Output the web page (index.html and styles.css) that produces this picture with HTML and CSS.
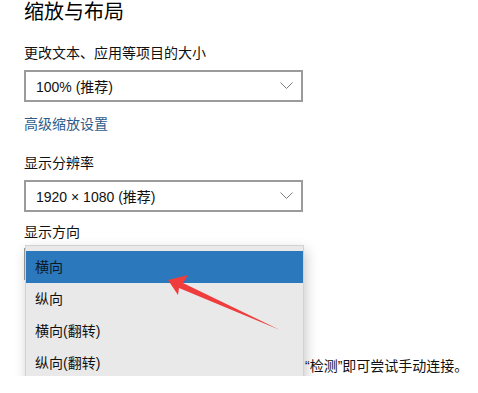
FILE: index.html
```html
<!DOCTYPE html>
<html>
<head>
    <meta charset="utf-8">
    <title>缩放与布局</title>
    <link rel="stylesheet" href="styles.css">
</head>
<body>
    <h1>缩放与布局</h1>

    <p class="label label-first">更改文本、应用等项目的大小</p>
    <div class="select">
        <span>100% (推荐)</span>
        <svg class="chevron" width="13" height="8" viewBox="0 0 13 8"><polyline points="0.5,0.5 6.5,6.5 12.5,0.5" fill="none" stroke="#7a7a7a" stroke-width="1"/></svg>
    </div>

    <a class="link" href="#">高级缩放设置</a>

    <p class="label label-res">显示分辨率</p>
    <div class="select">
        <span>1920 × 1080 (推荐)</span>
        <svg class="chevron" width="13" height="8" viewBox="0 0 13 8"><polyline points="0.5,0.5 6.5,6.5 12.5,0.5" fill="none" stroke="#7a7a7a" stroke-width="1"/></svg>
    </div>

    <div class="orient">
        <p class="label label-orient">显示方向</p>
        <div class="select select-hidden">
            <span>横向</span>
        </div>

        <!-- open dropdown popup -->
        <div class="menu">
            <div class="item active">横向</div>
            <div class="item">纵向</div>
            <div class="item">横向(翻转)</div>
            <div class="item">纵向(翻转)</div>
            <svg class="arrow" width="277" height="136" viewBox="0 0 277 136">
                <polygon points="142,34 162,29 157,37 254,84 153,42 152,49" fill="#ef3c3c"/>
            </svg>
        </div>
    </div>

    <p class="help">“检测”即可尝试手动连接。</p>
</body>
</html>
```

FILE: styles.css
```css
body {
    margin: 0;
    padding: 0 24px;
    font-family: "Liberation Sans", "Noto Sans CJK SC", sans-serif;
    color: #111;
    background-color: #ffffff;
}
h1 {
    margin: 0;
    padding-top: 1px;
    font-size: 20px;
    font-weight: normal;
    line-height: 23px;
    color: #000;
}
.label {
    margin: 0;
    font-size: 14px;
    line-height: 20px;
}
.label-first {
    margin-top: 19px;
}
.label-res {
    margin-top: 19px;
}
.label-orient {
    margin-top: 10px;
}
.select {
    box-sizing: border-box;
    width: 279px;
    height: 32px;
    margin-top: 7px;
    padding: 0 8px 0 10px;
    border: 2px solid #9b9b9b;
    background: #fff;
    display: flex;
    align-items: center;
    justify-content: space-between;
    font-size: 14px;
}
.chevron {
    display: block;
}
.link {
    display: block;
    margin-top: 12px;
    font-size: 14px;
    line-height: 20px;
    color: #2b5c8c;
    text-decoration: none;
}
.orient {
    position: relative;
}
.select-hidden {
    margin-top: 6px;
}
.menu {
    position: absolute;
    top: 23px;
    left: 1px;
    box-sizing: border-box;
    width: 279px;
    height: 138px;
    padding: 5px 0 3px;
    background: #e9e9e9;
    border: 1px solid #d2d2d2;
    box-shadow: 2px 5px 12px rgba(0, 0, 0, 0.22);
}
.item {
    height: 32px;
    line-height: 32px;
    padding-left: 9px;
    font-size: 14px;
    color: #111;
}
.item.active {
    background: #2b78bd;
    color: #0d1a26;
}
.arrow {
    position: absolute;
    top: 0;
    left: 0;
    overflow: visible;
    pointer-events: none;
}
.help {
    margin: 76px 0 0;
    padding-left: 281px;
    font-size: 14px;
    line-height: 20px;
    white-space: nowrap;
}
```
